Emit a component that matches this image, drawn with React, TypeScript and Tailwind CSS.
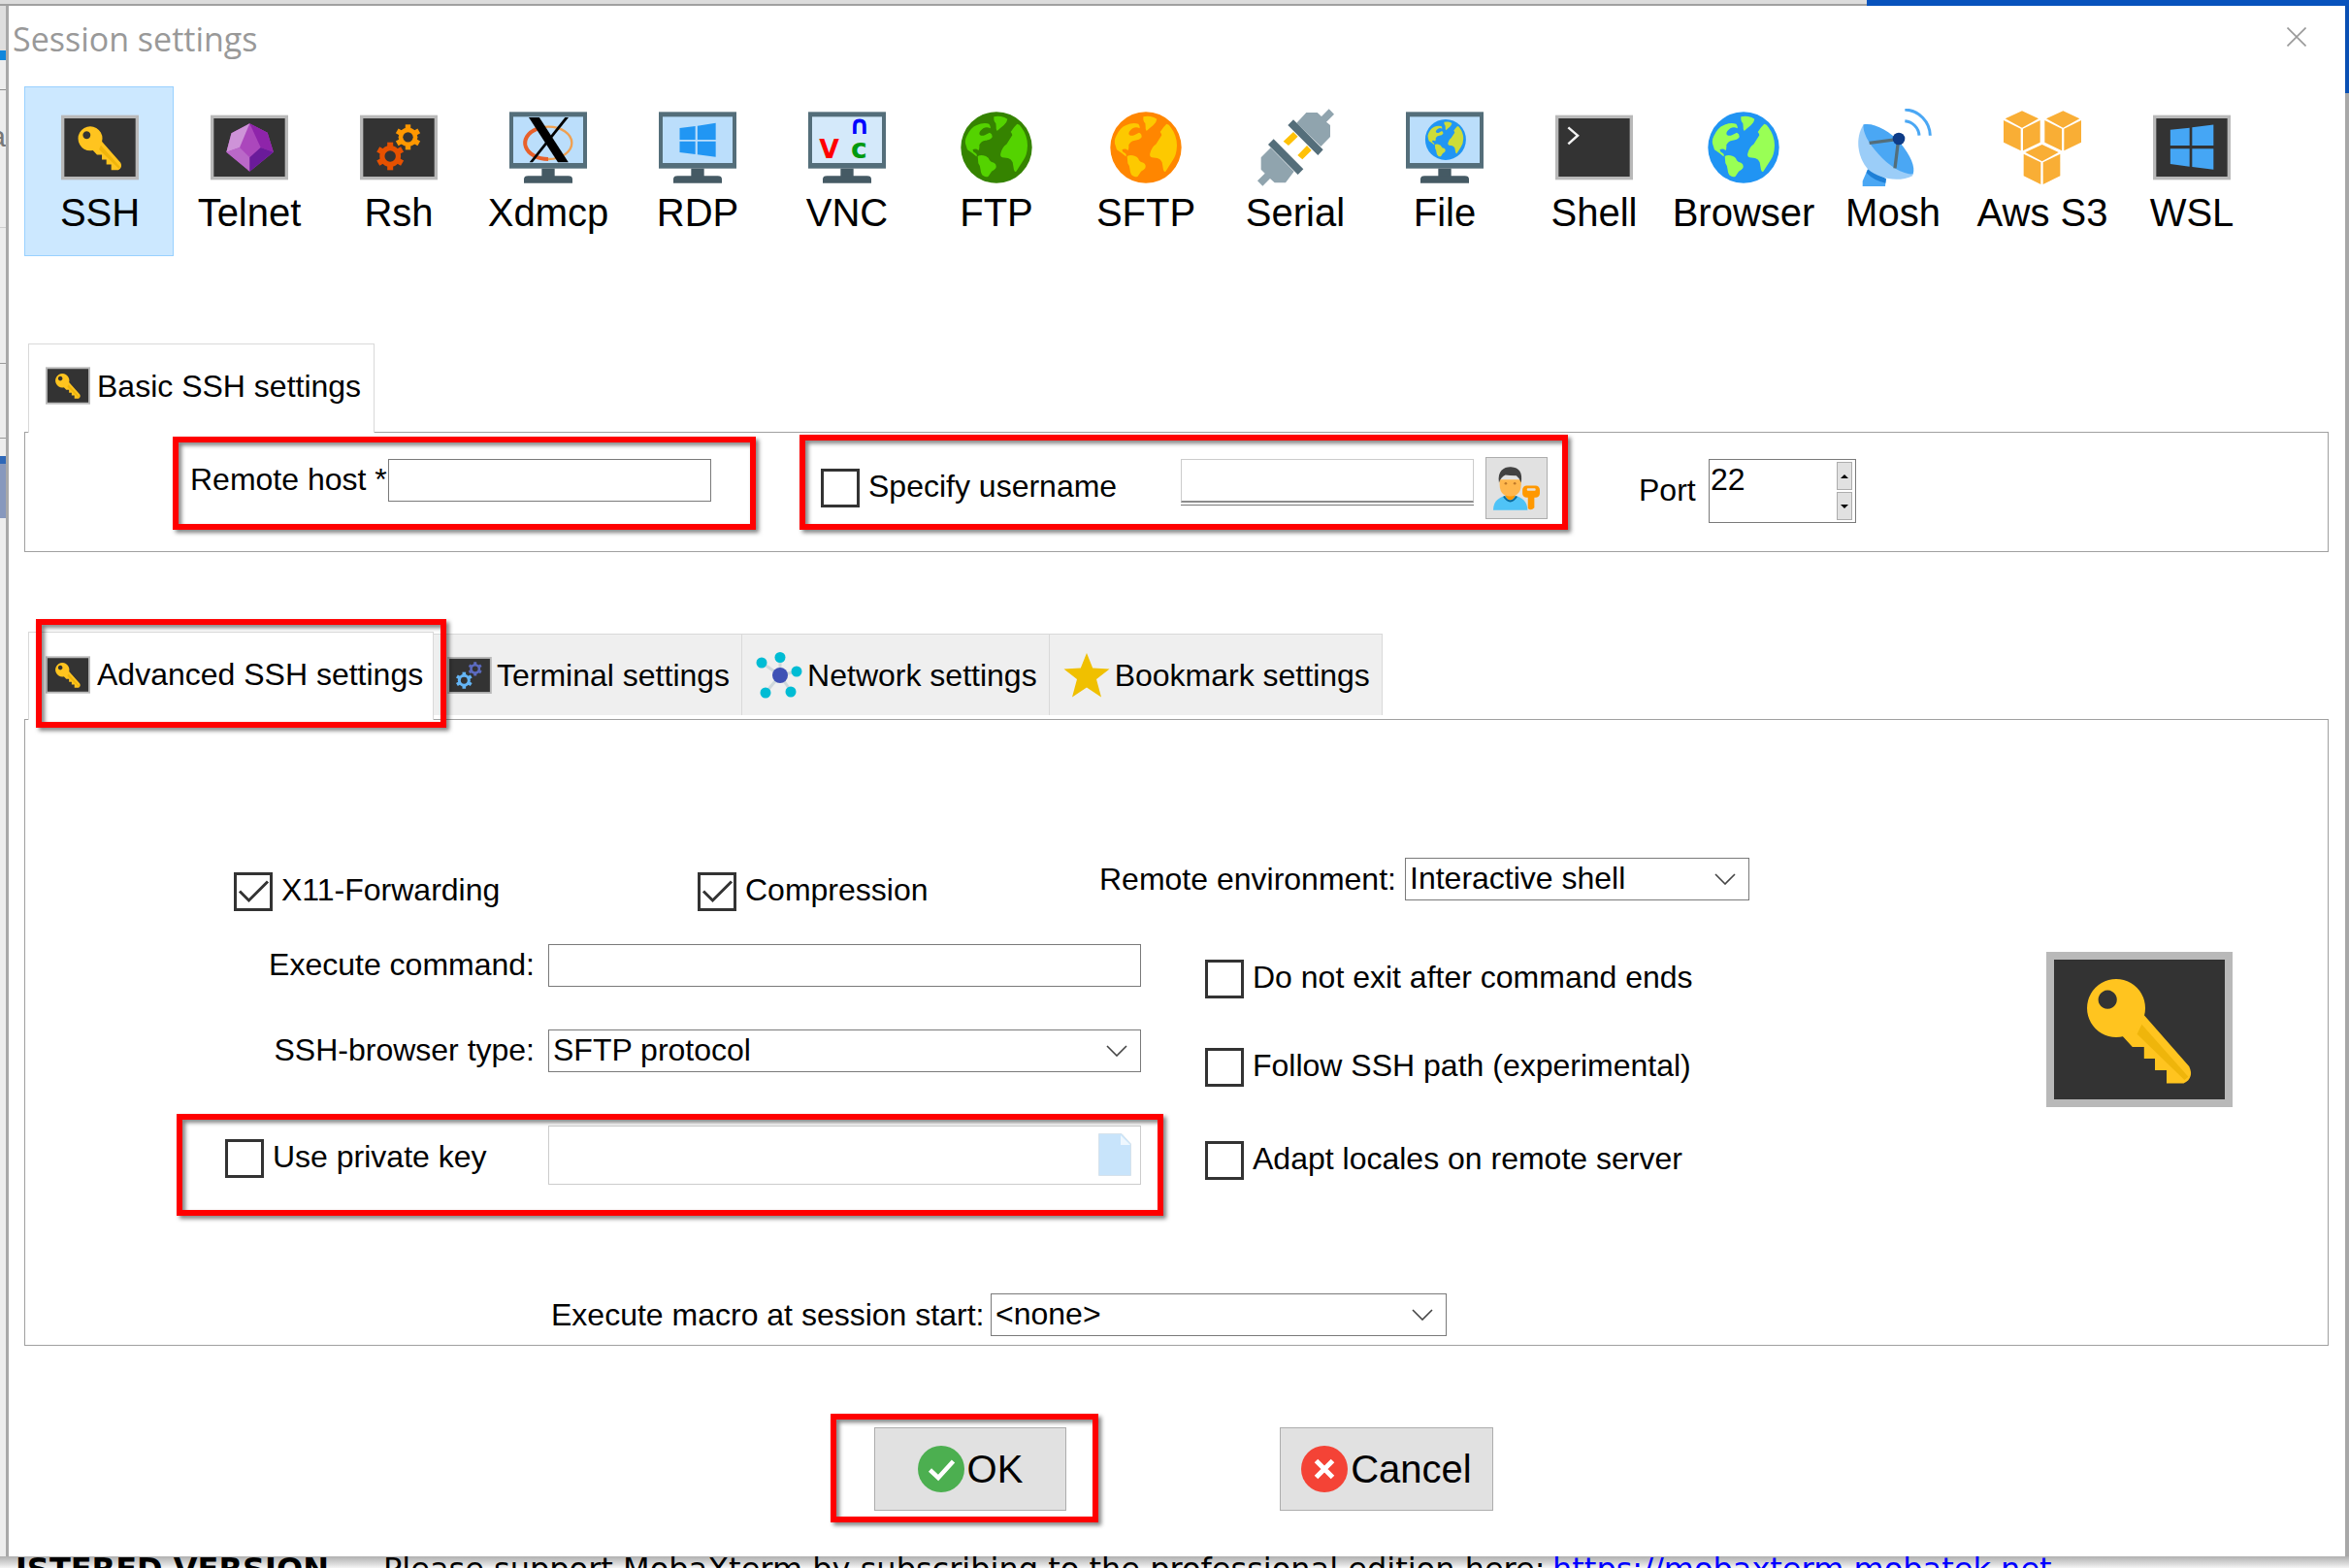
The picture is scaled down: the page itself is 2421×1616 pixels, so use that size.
import { useId, useState, type ReactNode } from 'react';

const GLOBE_LAND = [
  'M26 114Q20 100 28 85Q40 58 59 51Q78 42 97 47Q103 55 101 61Q90 54 79 61Q64 72 68 80Q74 86 84 82L99 74Q108 78 107 88Q100 98 86 98Q72 100 67 112Q68 126 64 129Q58 122 47 126Q46 134 55 137Q62 142 58 148Q44 136 30 127Z',
  'M62 147Q70 143 80 145Q96 148 99 160Q102 166 112 167Q122 172 118 184Q112 192 105 194L95 209Q88 213 80 208Q72 204 71 190Q70 176 64 169Z',
  'M112 25Q122 22 134 24Q146 26 154 32Q152 44 143 51Q134 58 122 69Q118 66 119 55L118 45Q111 40 112 25Z',
  'M184 47Q192 48 197 58Q216 84 216 114Q215 144 203 160L181 194Q177 198 174 189L170 166Q166 156 156 153L139 151Q130 148 133 138Q138 118 151 110L169 82Q168 76 164 72Q174 56 184 47Z',
];

function Globe({ sea, land }: { sea: string; land: string }) {
  return (
    <svg viewBox="0 0 240 240" className="size-20">
      <circle cx="120" cy="120" r="110" fill={sea} />
      {GLOBE_LAND.map((d) => <path key={d} d={d} fill={land} />)}
    </svg>
  );
}

function Screen({ children }: { children?: ReactNode }) {
  return (
    <>
      <rect x="0" y="4" width="48" height="40" fill="#b9b9b9" />
      <rect x="2" y="6" width="44" height="36" fill="#333" />
      {children}
    </>
  );
}

function Console({ children }: { children?: ReactNode }) {
  return (
    <svg viewBox="0 0 48 48" className="size-20">
      <Screen>{children}</Screen>
    </svg>
  );
}

function Monitor({ tint = '#bbdefb', children }: { tint?: string; children?: ReactNode }) {
  return (
    <svg viewBox="0 0 48 48" className="size-20">
      <rect x="0" y="2" width="48" height="35" fill="#546e7a" />
      <rect x="2.4" y="5" width="43.2" height="28.6" fill={tint} />
      <rect x="20" y="37" width="8" height="5" fill="#455a64" />
      <path d="M9 46V43.5Q9 41.5 11.5 41.5H36.5Q39 41.5 39 43.5V46Z" fill="#455a64" />
      {children}
    </svg>
  );
}

function KeyShape() {
  return (
    <>
      <path
        d="M24.5 19.5L36.8 33.5Q38.2 36.5 35.4 37.9H31V34.5H28V31.5H25.2V28.5H22.2L19 25Z"
        fill="#ffc41f"
      />
      <path d="M24.6 22.7L36.6 36.2L35.6 37L23.4 25.2Z" fill="#efb50b" />
      <path
        fillRule="evenodd"
        d="M18 11a7.5 7.5 0 1 0 .01 0ZM15.8 13.9a2.4 2.4 0 1 1-.01 0Z"
        fill="#ffc41f"
      />
    </>
  );
}

function KeyScreen({ className }: { className: string }) {
  return (
    <svg viewBox="0 4 48 40" className={className}>
      <Screen><KeyShape /></Screen>
    </svg>
  );
}

function Gear({ cx, cy, r, fill }: { cx: number; cy: number; r: number; fill: string }) {
  const w = r * 0.42;
  return (
    <g fill={fill}>
      {[0, 60, 120].map((a) => (
        <rect
          key={a}
          x={cx - w / 2}
          y={cy - r}
          width={w}
          height={r * 2}
          transform={`rotate(${a} ${cx} ${cy})`}
        />
      ))}
      <circle cx={cx} cy={cy} r={r * 0.76} />
      <circle cx={cx} cy={cy} r={r * 0.4} fill="#333" />
    </g>
  );
}

function Cube({ x, y }: { x: number; y: number }) {
  return (
    <g transform={`translate(${x} ${y})`} fill="#f9ae35">
      <path d="M57 7L108 31L57 59L5 31Z" />
      <path d="M0 36L53 62V130L0 104Z" />
      <path d="M60 62L113 36V104L60 130Z" />
    </g>
  );
}

const sessionTypes: { name: string; icon: ReactNode }[] = [
  { name: 'SSH', icon: <Console><KeyShape /></Console> },
  {
    name: 'Telnet',
    icon: (
      <Console>
        <path d="M24.2 9.2L12.9 15.2L9.8 26.8L24.2 38.8L38.9 26.8L35.2 14.8Z" fill="#ab47bc" />
        <path d="M24.2 9.2L12.9 15.2L9.8 26.8L18 24Z" fill="#ce93d8" />
        <path d="M9.8 26.8L18 24L24.2 30.2V38.8Z" fill="#ba68c8" />
        <path d="M24.2 9.2L35.2 14.8L38.9 26.8L31 24Z" fill="#8e24aa" />
        <path d="M38.9 26.8L31 24L24.2 30.2V38.8Z" fill="#6a1b9a" />
      </Console>
    ),
  },
  {
    name: 'Rsh',
    icon: (
      <Console>
        <Gear cx={29.7} cy={17.6} r={7.8} fill="#ff9800" />
        <Gear cx={18.7} cy={29.4} r={8.6} fill="#e65100" />
      </Console>
    ),
  },
  {
    name: 'Xdmcp',
    icon: (
      <Monitor>
        <ellipse cx="24.2" cy="21.2" rx="14.4" ry="10" fill="none" stroke="#f0a050" strokeWidth="1.4" />
        <path d="M17 12.5A14.4 10 0 0 0 24 31.2" fill="none" stroke="#e8602a" strokeWidth="2.4" />
        <path d="M12 5.4H18.5L36.5 33.2H30Z" fill="#000" />
        <path d="M34.4 5.4H36.6L14.4 33.2H12.4Z" fill="#000" />
      </Monitor>
    ),
  },
  {
    name: 'RDP',
    icon: (
      <Monitor>
        <path
          d="M12.9 12L22.6 10.8V19.2H12.9ZM23.9 10.6L35.2 8.8V19.2H23.9ZM12.9 20.2H22.6V28.2L12.9 27ZM23.9 20.2H35.2V29.8L23.9 28.4Z"
          fill="#2196f3"
        />
      </Monitor>
    ),
  },
  {
    name: 'VNC',
    icon: (
      <Monitor tint="#d4e9fa">
        <g fontFamily="DejaVu Sans, sans-serif" fontWeight="bold" textAnchor="middle">
          <text x="13" y="30.8" fontSize="16" fill="#f00">V</text>
          <text x="31.5" y="30.8" fontSize="17" fill="#009a10">c</text>
          <text x="31.7" y="15.6" fontSize="16" fill="#00f">∩</text>
        </g>
      </Monitor>
    ),
  },
  { name: 'FTP', icon: <Globe sea="#358300" land="#54d300" /> },
  { name: 'SFTP', icon: <Globe sea="#ff8600" land="#fdc900" /> },
  {
    name: 'Serial',
    icon: (
      <svg viewBox="0 0 240 240" className="size-20">
        <path d="M154 12H188L201 24L224 1L240 17L216 41L228 51V87L199 117L124 44Z" fill="#90a4ae" />
        <path d="M44 121L116 194L90 229H56L42 216L19 239L3 223L26 200L14 188V151Z" fill="#90a4ae" />
        <path d="M114 72L128 86L99 114L83 101ZM156 114L170 129L142 157L127 144Z" fill="#ffc107" />
        <path d="M114 34L206 127L190 144L97 51ZM53 94L145 187L128 204L36 111Z" fill="#546e7a" />
      </svg>
    ),
  },
  {
    name: 'File',
    icon: (
      <Monitor>
        <g transform="translate(10.8 5.4) scale(0.1145)">
          <circle cx="120" cy="120" r="110" fill="#2196f3" />
          {GLOBE_LAND.map((d) => <path key={d} d={d} fill="#cddc39" />)}
        </g>
      </Monitor>
    ),
  },
  {
    name: 'Shell',
    icon: (
      <Console>
        <path d="M8 11.6L13.8 16.6L8 21.8" fill="none" stroke="#f2f2f2" strokeWidth="1.5" />
      </Console>
    ),
  },
  { name: 'Browser', icon: <Globe sea="#2094f3" land="#99ff55" /> },
  {
    name: 'Mosh',
    icon: (
      <svg viewBox="0 0 240 240" className="size-20">
        <path d="M42 187L98 219L96 240H26V224Z" fill="#4aa7f4" />
        <path d="M44 184L99 217L97 230Q60 222 38 198Z" fill="#1e7fd6" />
        <path d="M29 49C2 90 10 150 42 187C80 220 140 228 182 207Z" fill="#9bcdf8" />
        <path d="M29 49C60 42 110 68 142 105C175 145 190 180 182 203C150 203 105 175 75 140C42 105 25 70 29 49Z" fill="#4aa7f4" />
        <path d="M47 106L137 94L126 184" fill="none" stroke="#546e7a" strokeWidth="10" />
        <circle cx="138" cy="93" r="19" fill="#0d3b87" />
        <path d="M157 38A48 48 0 0 1 201 83M157 3A82 82 0 0 1 235 83" fill="none" stroke="#4aa7f4" strokeWidth="9" />
      </svg>
    ),
  },
  {
    name: 'Aws S3',
    icon: (
      <svg viewBox="0 0 240 240" className="size-20">
        <Cube x={0} y={0} />
        <Cube x={127} y={0} />
        <Cube x={62} y={104} />
      </svg>
    ),
  },
  {
    name: 'WSL',
    icon: (
      <Console>
        <path
          d="M10.7 13L22.6 11.8V22.8H10.7ZM24.2 11.6L37.4 9.9V22.8H24.2ZM10.7 24.8H22.6V35.8L10.7 34.2ZM24.2 24.8H37.4V37.6L24.2 36Z"
          fill="#45a6f5"
        />
      </Console>
    ),
  },
];

const settingTabs: { label: string; icon: ReactNode }[] = [
  {
    label: 'Terminal settings',
    icon: (
      <svg viewBox="0 4 48 40" className="h-[38px] w-[46px]">
        <Screen>
          <Gear cx={30} cy={17} r={7.5} fill="#5c6bc0" />
          <Gear cx={18} cy={29.5} r={9} fill="#64b5f6" />
        </Screen>
      </svg>
    ),
  },
  {
    label: 'Network settings',
    icon: (
      <svg viewBox="0 0 48 48" className="size-12">
        <path d="M25 24L6 11M25 24L10 42M25 24V5M25 24L42 20M25 24L36 40" stroke="#cfd8dc" strokeWidth="3" />
        <circle cx="25" cy="24" r="8" fill="#3f51b5" />
        <g fill="#00bcd4">
          <circle cx="6" cy="11" r="5.5" />
          <circle cx="10" cy="42" r="5.5" />
          <circle cx="25" cy="5.5" r="5.5" />
          <circle cx="42" cy="20" r="5.5" />
          <circle cx="36" cy="41" r="5.5" />
        </g>
      </svg>
    ),
  },
  {
    label: 'Bookmark settings',
    icon: (
      <svg viewBox="0 0 48 48" className="size-12">
        <path d="M24 1L30.2 16.6L47.5 17.4L34 28L39 46.5L24 36.4L9 46.5L14 28L0.5 17.4L17.8 16.6Z" fill="#f0c000" />
      </svg>
    ),
  },
];

// Red marker frame laid over the group it points at
function Highlight({ className = 'inset-0' }: { className?: string }) {
  return (
    <div
      className={`pointer-events-none absolute z-10 border-6 border-[#f00] drop-shadow-[3px_3px_2px_rgba(0,0,0,0.5)] ${className}`}
    />
  );
}

function CheckField({ label, checked = false }: { label: string; checked?: boolean }) {
  const id = useId();
  const [on, setOn] = useState(checked);
  return (
    <div className="flex items-center gap-[9px]">
      <span className="relative size-10 shrink-0">
        <input
          id={id}
          type="checkbox"
          checked={on}
          onChange={(e) => setOn(e.target.checked)}
          className="block size-10 appearance-none border-3 border-[#333] bg-white"
        />
        {on && (
          <svg viewBox="0 0 40 40" className="pointer-events-none absolute inset-0 size-10">
            <path d="M6 19.5L15.5 29L35 9.5" fill="none" stroke="#333" strokeWidth="3" />
          </svg>
        )}
      </span>
      <label htmlFor={id} className="pb-1 leading-9 whitespace-nowrap">{label}</label>
    </div>
  );
}

function SelectBox({ id, value, className }: { id: string; value: string; className: string }) {
  return (
    <div className={`relative ${className}`}>
      <select
        id={id}
        defaultValue={value}
        className="block h-11 w-full appearance-none border border-[#7a7a7a] bg-white pb-0.5 pl-1 leading-10"
      >
        <option>{value}</option>
      </select>
      <svg viewBox="0 0 22 12" className="pointer-events-none absolute top-4 right-[14px] h-3 w-[22px]">
        <path d="M1 1L11 11L21 1" fill="none" stroke="#444" strokeWidth="1.6" />
      </svg>
    </div>
  );
}

function UserKeyIcon() {
  return (
    <svg viewBox="0 0 145 136" className="h-[45px] w-12">
      <path d="M0 135C0 105 20 96 38 90H68C90 96 106 108 107 135Z" fill="#4fc3f7" />
      <path d="M38 76H68V92Q53 116 38 92Z" fill="#ff9800" />
      <path d="M33 92Q53 122 73 92" fill="none" stroke="#0b6796" strokeWidth="6" />
      <path d="M20 40H87V55Q86 92 53 92Q20 92 20 55Z" fill="#ffb74d" />
      <path d="M18 50C12 12 35 0 55 1C82 2 92 20 87 50Q83 36 72 28Q50 28 38 26Q24 32 18 50Z" fill="#424242" />
      <circle cx="39" cy="52" r="4" fill="#c07a2a" />
      <circle cx="67" cy="52" r="4" fill="#c07a2a" />
      <path d="M108 92H128V128Q118 138 108 130Z" fill="#ff9800" />
      <rect x="91" y="59" width="54" height="37" rx="13" fill="#ff9800" />
      <rect x="105" y="67" width="27" height="8" rx="3" fill="#e8e0d6" />
    </svg>
  );
}

function SpinButton({ label, d }: { label: string; d: string }) {
  return (
    <button aria-label={label} className="flex w-4 flex-1 items-center justify-center border border-[#adadad] bg-[#e1e1e1]">
      <svg viewBox="0 0 8 4" className="h-1 w-2"><path d={d} fill="#000" /></svg>
    </button>
  );
}

// Sliver of the window that sits behind the dialog
function LeftEdge() {
  return (
    <div className="flex w-[9px] shrink-0 flex-col overflow-hidden border-r-3 border-[#a8a8a8] bg-[#ededed]">
      <div className="h-[46px] bg-[#dedede]" />
      <div className="h-[10px] bg-[#0f86dc]" />
      <div className="h-[31px] border-b border-[#8c8c8c]" />
      <div className="flex h-[142px] justify-end border-b border-[#cfcfcf] pt-7 text-[30px] leading-10 text-[#777]">a</div>
      <div className="h-[140px] border-b border-[#9a9a9a]" />
      <div className="h-[77px] border-b border-[#9a9a9a]" />
      <div className="h-[18px]" />
      <div className="h-2 bg-[#2f68b8]" />
      <div className="h-14 bg-[#8798bd]" />
      <div className="flex-1" />
    </div>
  );
}

export default function App() {
  const [active, setActive] = useState('SSH');

  return (
    <div className="flex min-h-screen flex-col overflow-hidden bg-[#e4e4e4] font-['Liberation_Sans',Arial,sans-serif] text-[32px] leading-10 text-black">
      <div className="flex h-1.5 shrink-0">
        <div className="flex-1 border-b-2 border-[#a0a0a0] bg-[#dcdcdc]" />
        <div className="w-[497px] bg-[#0853bd]" />
      </div>

      <div className="flex flex-1">
        <LeftEdge />

        <main className="min-w-0 flex-1 bg-white pr-[17px] pl-4">
          <header className="-ml-3 flex h-[83px] items-start justify-between pt-3 pr-[23px]">
            <h1 className="font-['Open_Sans','Noto_Sans',sans-serif] text-[34px] leading-[44px] text-[#999]">Session settings</h1>
            <button aria-label="Close" className="mt-[10px]">
              <svg viewBox="0 0 20 20" className="size-5">
                <path d="M0.5 0.5L19.5 19.5M19.5 0.5L0.5 19.5" stroke="#999" strokeWidth="1.6" />
              </svg>
            </button>
          </header>

          <nav className="flex">
            {sessionTypes.map(({ name, icon }) => (
              <button
                key={name}
                onClick={() => setActive(name)}
                className={`flex h-[175px] w-[154px] flex-col items-center gap-1 border pt-[22px] pl-0.5 text-[40px] leading-[46px] whitespace-nowrap ${
                  active === name ? 'border-[#99d1ff] bg-[#cce8ff]' : 'border-transparent'
                }`}
              >
                {icon}
                {name}
              </button>
            ))}
          </nav>

          <section className="mt-[90px]">
            <button className="relative -mb-px ml-1 flex h-[92px] w-[357px] items-center gap-[7px] border border-b-0 border-[#d9d9d9] bg-white pb-1.5 pl-[17px] whitespace-nowrap">
              <KeyScreen className="h-[39px] w-[46px] shrink-0" />
              Basic SSH settings
            </button>
            <div className="flex h-[124px] items-start border border-[#a0a0a0]">
              <div className="relative mt-1 ml-[152px] flex h-24 w-[601px] items-start pt-[23px] pl-[18px]">
                <Highlight />
                <label htmlFor="host" className="w-[204px] leading-[42px] whitespace-nowrap">Remote host *</label>
                <input id="host" className="h-11 w-[333px] border border-[#7a7a7a] px-1" />
              </div>

              <div className="relative mt-0.5 ml-[45px] flex h-[98px] w-[792px] items-start justify-between pt-[23px] pr-[21px] pl-[22px]">
                <Highlight />
                <div className="flex h-16 items-center">
                  <CheckField label="Specify username" />
                </div>
                <div className="flex gap-3">
                  <div className="mt-0.5 h-12 w-[302px] border-b border-[#7a7a7a] bg-white">
                    <input
                      aria-label="Username"
                      disabled
                      className="block h-[45px] w-full border border-b-2 border-[#ccc] border-b-[#8c8c8c] bg-white px-1"
                    />
                  </div>
                  <button aria-label="Manage users" className="flex h-16 w-16 items-center justify-center border border-[#adadad] bg-[#e1e1e1]">
                    <UserKeyIcon />
                  </button>
                </div>
              </div>

              <div className="mt-[27px] ml-[73px] flex items-center">
                <label htmlFor="port" className="w-[72px] pb-0.5">Port</label>
                <div className="flex h-[66px] w-[152px] items-start border border-[#7a7a7a] bg-white">
                  <input id="port" defaultValue="22" className="h-10 min-w-0 flex-1 pl-px" />
                  <div className="mr-[3px] flex h-full flex-col gap-0.5 py-0.5">
                    <SpinButton label="Increase port" d="M4 0L8 4H0Z" />
                    <SpinButton label="Decrease port" d="M0 0H8L4 4Z" />
                  </div>
                </div>
              </div>
            </div>
          </section>

          <section className="mt-[82px]">
            <div className="relative -mb-px ml-1 flex items-start">
              <Highlight className="top-[-13px] left-2 h-28 w-[423px]" />
              <button className="flex h-[91px] w-[418px] items-center gap-[7px] border border-b-0 border-[#d9d9d9] bg-white pb-1 pl-[17px] whitespace-nowrap">
                <KeyScreen className="h-[39px] w-[46px] shrink-0" />
                Advanced SSH settings
              </button>
              {settingTabs.map(({ label, icon }) => (
                <button
                  key={label}
                  className="mt-0.5 flex h-[84px] items-center gap-[5px] border-t border-r border-[#d9d9d9] bg-[#efefef] pr-3 pl-[14px]"
                >
                  {icon}
                  {label}
                </button>
              ))}
            </div>

            <div className="border border-[#a0a0a0] pt-[142px] pb-[9px]">
              <div className="ml-[215px] flex items-start">
                <div className="mt-[15px] w-[478px]">
                  <CheckField label="X11-Forwarding" checked />
                </div>
                <div className="mt-[15px] w-[414px]">
                  <CheckField label="Compression" checked />
                </div>
                <label htmlFor="env" className="w-[315px] leading-[44px]">Remote environment:</label>
                <SelectBox id="env" value="Interactive shell" className="w-[355px]" />
              </div>

              <div className="mt-[34px] flex items-start">
                <div className="ml-[156px] w-[1017px]">
                  <div className="flex items-center gap-[14px]">
                    <label htmlFor="command" className="w-[369px] pb-0.5 text-right">Execute command:</label>
                    <input id="command" className="h-11 w-[611px] border border-[#7a7a7a] px-1" />
                  </div>
                  <div className="mt-11 flex items-center gap-[14px]">
                    <label htmlFor="browser" className="w-[369px] pb-0.5 text-right">SSH-browser type:</label>
                    <SelectBox id="browser" value="SFTP protocol" className="w-[611px]" />
                  </div>
                  <div className="relative mt-[43px] flex h-[105px] items-start justify-between pt-3 pr-[23px] pl-[50px]">
                    <Highlight />
                    <div className="flex h-[68px] items-center">
                      <CheckField label="Use private key" />
                    </div>
                    <div className="relative">
                      <input
                        aria-label="Private key file"
                        disabled
                        className="block h-[61px] w-[611px] border border-[#ccc] bg-white px-1"
                      />
                      <svg viewBox="0 0 34 44" className="absolute top-2 right-[10px] h-11 w-[34px]">
                        <path d="M0.5 0.5H24L33.5 11V43.5H0.5Z" fill="#c8e4fb" stroke="#d6e2ec" />
                        <path d="M23 2V12H33Z" fill="#eef7fe" />
                      </svg>
                    </div>
                  </div>
                </div>

                <div className="mt-4 ml-[43px]">
                  <CheckField label="Do not exit after command ends" />
                  <div className="mt-[51px]">
                    <CheckField label="Follow SSH path (experimental)" />
                  </div>
                  <div className="mt-14">
                    <CheckField label="Adapt locales on remote server" />
                  </div>
                </div>

                <KeyScreen className="mt-2 mr-[98px] ml-auto h-40 w-48" />
              </div>

              <div className="mt-20 ml-[542px] flex items-center">
                <label htmlFor="macro" className="w-[453px] whitespace-nowrap">Execute macro at session start:</label>
                <SelectBox id="macro" value="<none>" className="w-[470px]" />
              </div>
            </div>
          </section>

          <div className="mt-[70px] ml-[831px] flex pb-[35px] text-[40px]">
            <div className="relative h-28 w-[276px] pt-[14px] pl-[45px]">
              <Highlight />
              <button className="flex h-[86px] w-[198px] items-center justify-center gap-[3px] border border-[#adadad] bg-[#e1e1e1]">
                <svg viewBox="0 0 48 48" className="size-12">
                  <circle cx="24" cy="24" r="24" fill="#4caf50" />
                  <path d="M12.5 25L21 33L36.5 16" fill="none" stroke="#fff" strokeWidth="4.5" />
                </svg>
                OK
              </button>
            </div>
            <button className="mt-[14px] ml-[187px] flex h-[86px] w-[220px] items-center justify-center gap-[3px] border border-[#adadad] bg-[#e1e1e1]">
              <svg viewBox="0 0 48 48" className="size-12">
                <circle cx="24" cy="24" r="24" fill="#f44336" />
                <path d="M15.5 15.5L32.5 32.5M32.5 15.5L15.5 32.5" stroke="#fff" strokeWidth="5" />
              </svg>
              Cancel
            </button>
          </div>
        </main>

        <div className="w-1 shrink-0 bg-[#a8a8a8]">
          <div className="h-[90px] bg-[#0a50b4]" />
        </div>
      </div>

      <footer className="flex h-3 shrink-0 overflow-hidden bg-linear-to-b from-[#b0b0b0] to-[#f4f4f4] font-['DejaVu_Sans',sans-serif] text-[32px] leading-[26px] whitespace-nowrap">
        <div className="flex w-[339px] shrink-0 justify-end font-bold">ISTERED VERSION</div>
        <span className="ml-[56px] w-[1205px] shrink-0">Please support MobaXterm by subscribing to the professional edition here:</span>
        <a href="https://mobaxterm.mobatek.net" className="text-[#00f]">https://mobaxterm.mobatek.net</a>
      </footer>
    </div>
  );
}
